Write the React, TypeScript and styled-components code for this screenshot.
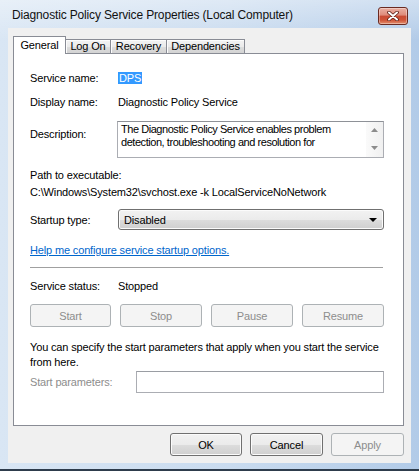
import styled, { createGlobalStyle } from 'styled-components';

const GlobalStyle = createGlobalStyle`
  html, body {
    margin: 0;
    padding: 0;
    background: #ffffff;
  }
  body {
    font-family: 'Liberation Sans', Arial, sans-serif;
    font-size: 11px;
  }
`;

const tabs = [
  { label: 'General', width: 53, active: true },
  { label: 'Log On', width: 46, active: false },
  { label: 'Recovery', width: 57, active: false },
  { label: 'Dependencies', width: 79, active: false },
];

export default function App() {
  return (
    <>
      <GlobalStyle />
      <Window>
        <TitleBar>
          <Title>Diagnostic Policy Service Properties (Local Computer)</Title>
          <CloseButton aria-label='Close'>
            <svg width='12' height='10' viewBox='0 0 12 10'>
              <path d='M2 1.5 L10 8.5 M10 1.5 L2 8.5' stroke='#5a1d14' strokeWidth='3.6' strokeLinecap='round' />
              <path d='M2 1.5 L10 8.5 M10 1.5 L2 8.5' stroke='#ffffff' strokeWidth='2' strokeLinecap='round' />
            </svg>
          </CloseButton>
        </TitleBar>

        <Client>
          <TabStrip>
            {tabs.map((t) => (
              <Tab key={t.label} $active={t.active} $width={t.width}>
                {t.label}
              </Tab>
            ))}
          </TabStrip>

          <Panel>
            <Row $mt={17}>
              <Label>Service name:</Label>
              <Value>
                <Selected>DPS</Selected>
              </Value>
            </Row>

            <Row $mt={10}>
              <Label>Display name:</Label>
              <Value>Diagnostic Policy Service</Value>
            </Row>

            <Row $mt={12} $top>
              <Label $pt={6}>Description:</Label>
              <DescBox>
                <DescText>
                  The Diagnostic Policy Service enables problem
                  <br />
                  detection, troubleshooting and resolution for
                </DescText>
                <ScrollCol>
                  <svg width='7' height='4' viewBox='0 0 7 4'>
                    <path d='M0 4 L3.5 0 L7 4 Z' fill='#8c8c8c' />
                  </svg>
                  <svg width='7' height='4' viewBox='0 0 7 4'>
                    <path d='M0 0 L3.5 4 L7 0 Z' fill='#8c8c8c' />
                  </svg>
                </ScrollCol>
              </DescBox>
            </Row>

            <Line $mt={10}>Path to executable:</Line>
            <Line $mt={3}>C:\Windows\System32\svchost.exe -k LocalServiceNoNetwork</Line>

            <Row $mt={10}>
              <Label>Startup type:</Label>
              <Select>
                <span>Disabled</span>
                <svg width='8' height='4' viewBox='0 0 8 4'>
                  <path d='M0 0 L8 0 L4 4 Z' fill='#000' />
                </svg>
              </Select>
            </Row>

            <Link $mt={13} href='#'>
              Help me configure service startup options.
            </Link>

            <Separator $mt={10} />

            <Row $mt={10}>
              <Label>Service status:</Label>
              <Value>Stopped</Value>
            </Row>

            <ActionRow $mt={11}>
              <Button disabled $w={81}>Start</Button>
              <Button disabled $w={82}>Stop</Button>
              <Button disabled $w={82}>Pause</Button>
              <Button disabled $w={82}>Resume</Button>
            </ActionRow>

            <Line $mt={13} $lh={15}>
              You can specify the start parameters that apply when you start the service
              <br />
              from here.
            </Line>

            <Row $mt={1} $labelWidth={106}>
              <Label $disabled>Start parameters:</Label>
              <Input />
            </Row>
          </Panel>

          <DialogButtons>
            <Button $w={72}>OK</Button>
            <Button $w={73}>Cancel</Button>
            <Button disabled $w={73}>Apply</Button>
          </DialogButtons>
        </Client>
      </Window>
    </>
  );
}

const Window = styled.div`
  width: 419px;
  height: 471px;
  box-sizing: border-box;
  display: flex;
  flex-direction: column;
  padding: 0 8px 6px;
  background:
    linear-gradient(to bottom, rgba(255, 255, 255, 0.4), rgba(255, 255, 255, 0) 40px),
    linear-gradient(to right, #d9e6f4 0%, #c9dbef 55%, #b2cbe8 100%);
  border-bottom: 2px solid #2e3c4c;
  color: #000;
  font-family: 'Liberation Sans', Arial, sans-serif;
  font-size: 11px;
  letter-spacing: -0.15px;
`;

const TitleBar = styled.div`
  height: 28px;
  flex: none;
  display: flex;
  justify-content: space-between;
  align-items: flex-start;
  padding: 0 3px 0 4px;
`;

const Title = styled.div`
  padding-top: 8px;
  line-height: 14px;
  font-size: 12px;
  letter-spacing: -0.15px;
  color: #111;
  white-space: nowrap;
`;

const CloseButton = styled.div`
  margin-top: 7px;
  width: 30px;
  height: 18px;
  box-sizing: border-box;
  display: flex;
  align-items: center;
  justify-content: center;
  border: 1px solid #6a2a22;
  border-radius: 3px;
  background: linear-gradient(
    to bottom,
    #eab0a3 0%,
    #de8a79 45%,
    #c94a33 50%,
    #cf5337 75%,
    #e29070 100%
  );
  box-shadow: inset 0 0 0 1px rgba(255, 255, 255, 0.35);
`;

const Client = styled.div`
  flex: 1;
  display: flex;
  flex-direction: column;
  padding: 8px 7px 0 5px;
  background: #f0f0f0;
`;

const TabStrip = styled.div`
  height: 17px;
  display: flex;
  align-items: flex-end;
  position: relative;
  z-index: 1;
`;

const Tab = styled.div<{ $active: boolean; $width: number }>`
  width: ${(p) => p.$width}px;
  box-sizing: border-box;
  height: ${(p) => (p.$active ? 18 : 14)}px;
  margin-bottom: ${(p) => (p.$active ? -1 : 0)}px;
  margin-left: -1px;
  padding-top: ${(p) => (p.$active ? 2 : 0)}px;
  line-height: 13px;
  text-align: center;
  border: 1px solid #898c95;
  border-bottom: none;
  background: ${(p) =>
    p.$active ? '#ffffff' : 'linear-gradient(to bottom, #f3f3f3 0%, #ebebeb 50%, #dedede 51%, #d3d3d3 100%)'};
  box-shadow: ${(p) => (p.$active ? 'none' : 'inset 1px 1px 0 #fcfcfc')};
  position: relative;
  z-index: ${(p) => (p.$active ? 2 : 1)};

  &:first-child {
    margin-left: 0;
  }
`;

const Panel = styled.div`
  height: 373px;
  box-sizing: border-box;
  display: flex;
  flex-direction: column;
  padding: 0 19px 0 16px;
  background: #ffffff;
  border: 1px solid #898c95;
`;

const Row = styled.div<{ $mt: number; $top?: boolean; $labelWidth?: number }>`
  margin-top: ${(p) => p.$mt}px;
  display: grid;
  grid-template-columns: ${(p) => p.$labelWidth ?? 88}px 1fr;
  align-items: ${(p) => (p.$top ? 'start' : 'center')};
  line-height: 14px;
`;

const Label = styled.div<{ $pt?: number; $disabled?: boolean }>`
  padding-top: ${(p) => p.$pt ?? 0}px;
  line-height: 14px;
  color: ${(p) => (p.$disabled ? '#8d8d8d' : '#000')};
  white-space: nowrap;
`;

const Value = styled.div`
  line-height: 14px;
  white-space: nowrap;
`;

const Selected = styled.span`
  display: inline-block;
  padding: 0 1px;
  line-height: 12px;
  background: #3399ff;
  color: #ffffff;
`;

const DescBox = styled.div`
  height: 37px;
  margin-left: -1px;
  box-sizing: border-box;
  display: flex;
  border: 1px solid #abadb3;
  border-top-color: #8e9197;
  background: #ffffff;
  overflow: hidden;
`;

const DescText = styled.div`
  flex: 1;
  padding: 1px 3px;
  line-height: 13px;
  letter-spacing: -0.45px;
  white-space: nowrap;
  overflow: hidden;
`;

const ScrollCol = styled.div`
  width: 17px;
  display: flex;
  flex-direction: column;
  justify-content: space-between;
  align-items: center;
  padding: 6px 0 7px;
  box-sizing: border-box;
  background: linear-gradient(to right, #fafafa, #f0f0f0);
`;

const Line = styled.div<{ $mt: number; $lh?: number }>`
  margin-top: ${(p) => p.$mt}px;
  line-height: ${(p) => p.$lh ?? 14}px;
  white-space: nowrap;
`;

const Select = styled.div`
  height: 21px;
  box-sizing: border-box;
  display: flex;
  align-items: center;
  justify-content: space-between;
  padding: 0 6px 0 5px;
  border: 1px solid #707070;
  border-radius: 3px;
  background: linear-gradient(to bottom, #f2f2f2 0%, #ebebeb 50%, #dddddd 51%, #cfcfcf 100%);
  box-shadow: inset 0 0 0 1px #fbfbfb;
`;

const Link = styled.a<{ $mt: number }>`
  margin-top: ${(p) => p.$mt}px;
  align-self: flex-start;
  line-height: 14px;
  color: #0066cc;
  text-decoration: underline;
`;

const Separator = styled.div<{ $mt: number }>`
  margin-top: ${(p) => p.$mt}px;
  margin-right: 1px;
  height: 1px;
  background: #a0a0a0;
  border-bottom: 1px solid #ffffff;
`;

const ActionRow = styled.div<{ $mt: number }>`
  margin-top: ${(p) => p.$mt}px;
  display: flex;
  justify-content: space-between;
`;

const Button = styled.button<{ $w: number }>`
  width: ${(p) => p.$w}px;
  height: 23px;
  box-sizing: border-box;
  padding: 0;
  font-family: inherit;
  font-size: 11px;
  letter-spacing: inherit;
  color: #000;
  border: 1px solid #707070;
  border-radius: 3px;
  background: linear-gradient(to bottom, #f2f2f2 0%, #ebebeb 50%, #dddddd 51%, #cfcfcf 100%);
  box-shadow: inset 0 0 0 1px #fbfbfb;

  &:disabled {
    color: #8d8d8d;
    border-color: #adb2b5;
    background: #f4f4f4;
    box-shadow: none;
  }
`;

const Input = styled.div`
  height: 22px;
  box-sizing: border-box;
  border: 1px solid #abadb3;
  border-top-color: #9a9da3;
  background: #ffffff;
`;

const DialogButtons = styled.div`
  margin-top: 7px;
  display: flex;
  justify-content: flex-end;
  gap: 8px;
`;
